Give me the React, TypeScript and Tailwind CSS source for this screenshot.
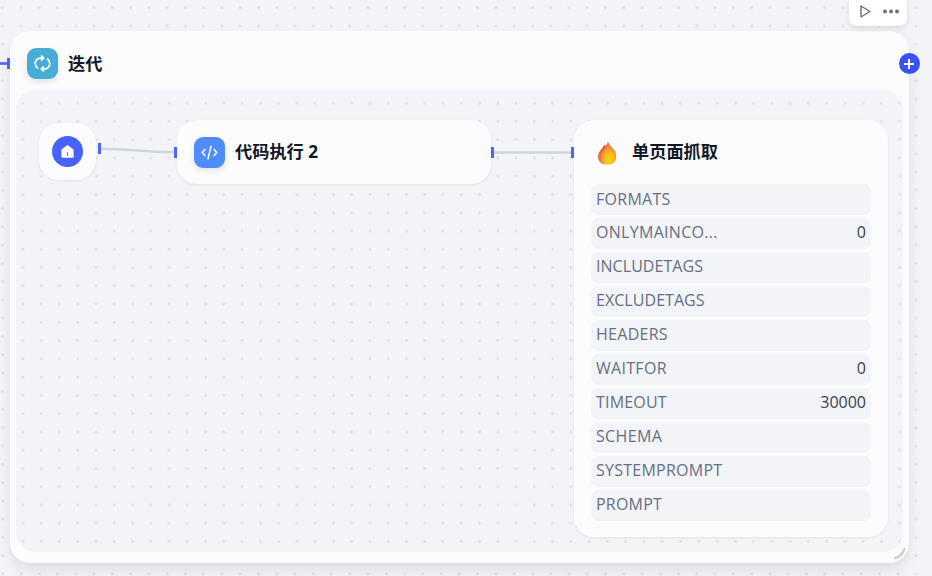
import React from 'react';

interface Param {
  label: string;
  value?: string;
  spacing: string;
}

const params: Param[] = [
  { label: 'FORMATS', spacing: 'tracking-[0.28px]' },
  { label: 'ONLYMAINCO...', value: '0', spacing: 'tracking-[0.3px]' },
  { label: 'INCLUDETAGS', spacing: 'tracking-[0.05px]' },
  { label: 'EXCLUDETAGS', spacing: 'tracking-[0.05px]' },
  { label: 'HEADERS', spacing: 'tracking-[0.28px]' },
  { label: 'WAITFOR', value: '0', spacing: 'tracking-[0.3px]' },
  { label: 'TIMEOUT', value: '30000', spacing: 'tracking-[0.2px]' },
  { label: 'SCHEMA', spacing: 'tracking-[0.35px]' },
  { label: 'SYSTEMPROMPT', spacing: 'tracking-[0.25px]' },
  { label: 'PROMPT', spacing: 'tracking-[0.2px]' },
];

const DOTS =
  'bg-[radial-gradient(circle_at_center,#e0e2e9_1px,transparent_1.8px)] bg-[size:18.28px_18.28px]';

const LoopIcon = () => (
  <svg width="17" height="17" viewBox="0 0 16 16" fill="none" stroke="#fff" strokeWidth="1.6" strokeLinecap="round" strokeLinejoin="round">
    <path d="M3.3 12.2A5.9 5.9 0 0 1 1.1 8C1.1 5.2 3.3 2.9 6.2 2.9H8.8M7.1.9l2 2-2 2" />
    <path d="M12.7 3.8A5.9 5.9 0 0 1 14.9 8C14.9 10.8 12.7 13.1 9.8 13.1H7.2M8.9 15.1l-2-2 2-2" />
  </svg>
);

const CodeIcon = () => (
  <svg width="17" height="15" viewBox="0 0 17 15" fill="none" stroke="#fff" strokeWidth="1.5" strokeLinecap="round" strokeLinejoin="round">
    <path d="M4 4.5 1.2 7.5 4 10.5M13 4.5l2.8 3-2.8 3M10 1.2 7 13.8" />
  </svg>
);

const HomeIcon = () => (
  <svg width="13" height="13" viewBox="0 0 13 13">
    <path
      fill="#fff"
      fillRule="evenodd"
      d="M5.7.4a1.3 1.3 0 0 1 1.6 0l4.9 3.8c.3.2.4.5.4.9V12c0 .5-.3.8-.8.8H1.2a.8.8 0 0 1-.8-.8V5.1c0-.4.1-.7.4-.9L5.7.4ZM6 7.3v3.5h1V7.3H6Z"
    />
  </svg>
);

const FlameIcon = () => (
  <svg width="20" height="24" viewBox="0 0 20 24">
    <defs>
      <linearGradient id="flameOuter" x1="0" y1="0" x2="0" y2="1">
        <stop offset="0" stopColor="#dc4a3e" />
        <stop offset="0.5" stopColor="#e5703f" />
        <stop offset="1" stopColor="#e08a55" />
      </linearGradient>
      <radialGradient id="flameInner" cx="0.55" cy="0.78" r="0.72">
        <stop offset="0" stopColor="#fbd60c" />
        <stop offset="0.45" stopColor="#f9b420" />
        <stop offset="0.8" stopColor="#f08038" />
        <stop offset="1" stopColor="#e4573f" />
      </radialGradient>
    </defs>
    <path
      fill="url(#flameOuter)"
      d="M7.5 3.5C6.5 6.9 1 9.8 1 15.8 1 20.3 3.7 23.3 8.5 23.5L13 14 10.5 3.3 8.2 5Z"
    />
    <path
      fill="url(#flameInner)"
      d="M11 .3C11.6 3.3 13.3 4.7 15 6.2 17.5 8.5 19.2 11.8 19.2 15.5 19.2 20.5 16 23.6 11.3 23.6S3.7 20.7 3.7 16.3C3.7 10.6 9.7 6.9 11 .3Z"
    />
  </svg>
);

const Port = ({ className }: { className: string }) => (
  <span className={`absolute h-[11px] w-[3px] bg-[#4b65ff] ${className}`} />
);

const ParamRow: React.FC<Param> = ({ label, value, spacing }) => (
  <div className="flex h-[31px] items-center justify-between rounded-[7px] bg-[#f2f4f7] px-[5px] pb-[3px] text-[16px] leading-none first:pb-px">
    <span className={`text-[#676f83] ${spacing}`}>{label}</span>
    <span className="text-[#354052]">{value}</span>
  </div>
);

const nodeClass =
  'absolute rounded-[20px] bg-[#fcfcfd] shadow-[0_1px_3px_rgba(16,24,40,0.07)]';
const titleClass = 'text-[17.2px] leading-[18px] font-bold text-[#101828]';

export default function App() {
  return (
    <div className="relative h-[576px] w-[932px] overflow-hidden bg-[#f2f4f7] font-['Open_Sans','Noto_Sans_CJK_SC',sans-serif]">
      <div className={`absolute inset-0 bg-position-[-6.4px_-1.5px] ${DOTS}`} />

      {/* iteration container */}
      <div className="absolute top-[31px] left-[10px] flex h-[532px] w-[899px] flex-col rounded-[20px] bg-[#fcfcfd] px-1.5 pb-[11px] shadow-[0_8px_16px_-2px_rgba(16,24,40,0.10),0_2px_6px_-2px_rgba(16,24,40,0.04)]">
        <div className="flex h-[59px] shrink-0 items-center gap-[10px] pt-[6px] pl-[11px]">
          <div className="flex size-[31px] items-center justify-center rounded-[9px] bg-[#47acd6] shadow-[0_3px_6px_rgba(16,24,40,0.10)]">
            <LoopIcon />
          </div>
          <span className={titleClass}>迭代</span>
        </div>
        <div className={`flex-1 rounded-[20px] bg-[#f2f4f7] bg-position-[-2.2px_4px] ${DOTS}`} />
      </div>

      {/* edges */}
      <svg className="absolute inset-0" width="932" height="576" fill="none" stroke="#d0d5dc" strokeWidth="2.6">
        <path d="M0 63.5H8" stroke="#4b65ff" />
        <path d="M100 148.8C137 148.8 138 152.3 175 152.3" />
        <path d="M493 152.5H572" />
      </svg>

      <div className={`${nodeClass} top-[123px] left-[39px] flex size-[57px] items-center justify-center`}>
        <div className="flex size-[31px] items-center justify-center rounded-full bg-[#4763ff]">
          <HomeIcon />
        </div>
      </div>

      <div className={`${nodeClass} top-[120px] left-[177px] flex h-[64px] w-[314px] items-center gap-[10px] pl-[17px]`}>
        <div className="flex size-[31px] items-center justify-center rounded-[9px] bg-[#4f8dfd] shadow-[0_3px_6px_rgba(16,24,40,0.10)]">
          <CodeIcon />
        </div>
        <span className={`${titleClass} pb-px`}>代码执行 2</span>
      </div>

      <div className={`${nodeClass} top-[120px] left-[574px] flex h-[417px] w-[314px] flex-col px-[17px]`}>
        <div className="flex h-[64px] shrink-0 items-center gap-[10px]">
          <div className="flex size-[31px] items-center justify-center pt-[2px]">
            <FlameIcon />
          </div>
          <span className={`${titleClass} pb-px`}>单页面抓取</span>
        </div>
        <div className="flex flex-col gap-[3px]">
          {params.map((param) => (
            <ParamRow key={param.label} {...param} />
          ))}
        </div>
      </div>

      <Port className="top-[58px] left-[7px]" />
      <Port className="top-[143px] left-[98px]" />
      <Port className="top-[147px] left-[174px]" />
      <Port className="top-[147px] left-[491px]" />
      <Port className="top-[147px] left-[571px]" />

      {/* add button */}
      <div className="absolute top-[53px] left-[898.5px] flex size-[21px] items-center justify-center rounded-full bg-[#3651f5]">
        <svg width="10" height="10" viewBox="0 0 10 10" stroke="#fff" strokeWidth="2">
          <path d="M5 0v10M0 5h10" />
        </svg>
      </div>

      {/* toolbar */}
      <div className="absolute top-[-6px] left-[849px] flex h-[32px] w-[58px] items-center gap-[11px] rounded-[8px] bg-white pt-[2px] pl-[11px] shadow-[0_3px_6px_rgba(16,24,40,0.10)]">
        <svg width="11" height="13" viewBox="0 0 11 13" fill="none" stroke="#676f83" strokeWidth="1.4" strokeLinejoin="round">
          <path d="M1 1v11l9-5.5Z" />
        </svg>
        <svg width="18" height="5" viewBox="0 0 18 5" fill="#676f83">
          <circle cx="3" cy="2.5" r="1.9" />
          <circle cx="9" cy="2.5" r="1.9" />
          <circle cx="15" cy="2.5" r="1.9" />
        </svg>
      </div>

      {/* resize handle */}
      <svg className="absolute top-[546px] left-[893px]" width="14" height="14" viewBox="0 0 14 14" fill="none" stroke="#cfcfd1" strokeWidth="2.4" strokeLinecap="round">
        <path d="M2 12.2C6.5 10.8 9.8 7.5 11.5 3" />
      </svg>
    </div>
  );
}
